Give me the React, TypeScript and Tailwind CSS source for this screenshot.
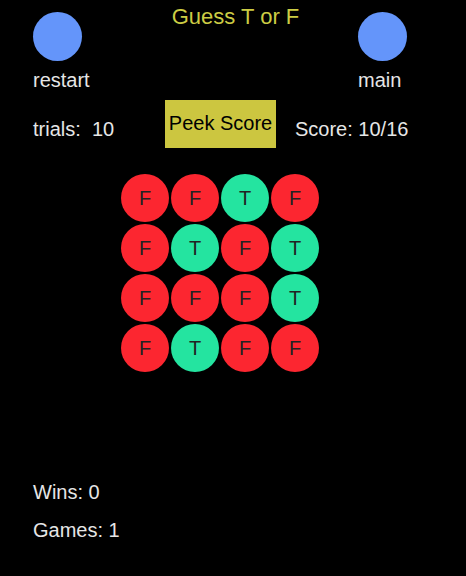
import { useState } from "react";

const cells = [
  "F", "F", "T", "F",
  "F", "T", "F", "T",
  "F", "F", "F", "T",
  "F", "T", "F", "F",
];

export default function App() {
  const [trials] = useState(10);

  return (
    <div className="w-[466px] h-[576px] bg-black text-[#e6e6e6] font-['Liberation_Sans',Arial,sans-serif] flex flex-col">
      {/* header */}
      <div className="grid grid-cols-[56px_1fr_49px] pl-[33px] pr-[59px]">
        <div className="flex flex-col">
          <div className="mt-[12px] w-[49px] h-[49px] rounded-full bg-[#6495fa]" />
          <div className="mt-[8px] text-[20px] leading-[23px]">restart</div>
        </div>
        <div className="pl-[24px] text-center text-[22px] leading-[25px] mt-[4px] text-[#cccc44] whitespace-nowrap">
          Guess T or F
        </div>
        <div className="flex flex-col">
          <div className="mt-[12px] w-[49px] h-[49px] rounded-full bg-[#6495fa]" />
          <div className="mt-[8px] text-[20px] leading-[23px]">main</div>
        </div>
      </div>

      {/* status row */}
      <div className="flex items-start pl-[33px] mt-[8px]">
        <div className="w-[132px] mt-[18px] text-[20px] leading-[23px] whitespace-pre">trials:  {trials}</div>
        <button className="w-[111px] h-[48px] bg-[#ccc640] text-black text-[20px] leading-[23px] pb-[1px]">
          Peek Score
        </button>
        <div className="ml-[19px] mt-[18px] text-[20px] leading-[23px]">Score: 10/16</div>
      </div>

      {/* board */}
      <div className="ml-[121px] mt-[26px] grid grid-cols-[repeat(4,48px)] gap-[2px] w-fit">
        {cells.map((c, i) => (
          <div
            key={i}
            className={`w-[48px] h-[48px] rounded-full flex items-center justify-center text-[20px] text-[#222] ${
              c === "T" ? "bg-[#24e4a0]" : "bg-[#fc2630]"
            }`}
          >
            {c}
          </div>
        ))}
      </div>

      {/* totals */}
      <div className="pl-[33px] mt-[109px] flex flex-col gap-[15px] text-[20px] leading-[23px]">
        <div>Wins: 0</div>
        <div>Games: 1</div>
      </div>
    </div>
  );
}
